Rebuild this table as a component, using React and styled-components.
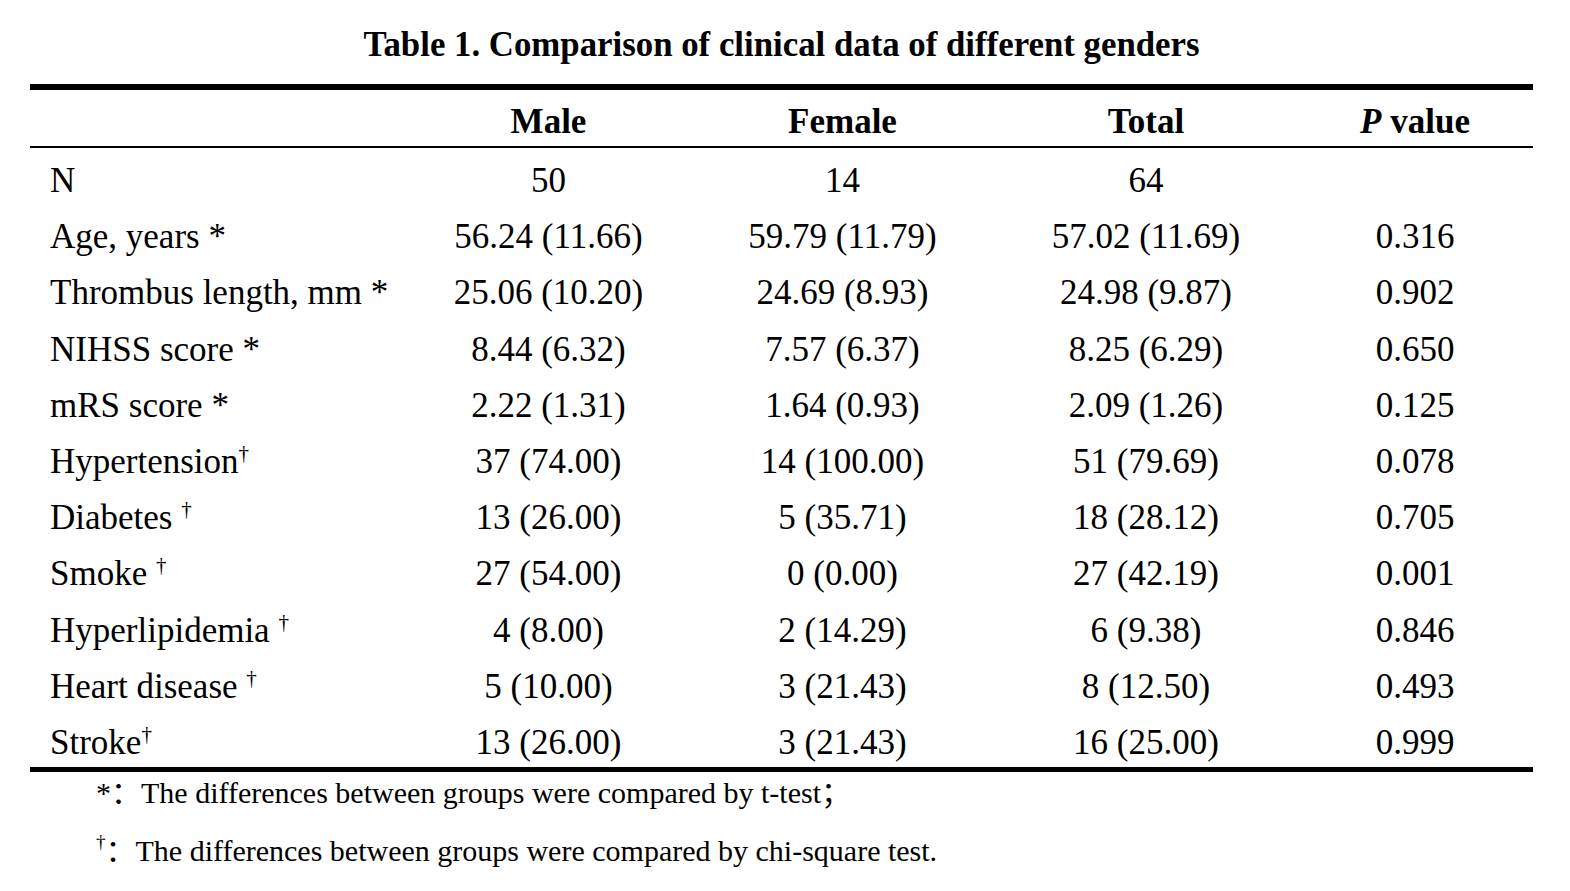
import React from "react";
import styled, { createGlobalStyle } from "styled-components";

const GlobalStyle = createGlobalStyle`
    body {
        margin: 0;
        background: #fff;
        color: #000;
        font-family: "Liberation Serif", "Times New Roman", serif;
    }
`;

const Page = styled.div`
    width: 1570px;
    height: 891px;
    padding: 0 37px 0 30px;
    box-sizing: border-box;
    overflow: hidden;
`;

const Title = styled.h1`
    margin: 0;
    height: 84px;
    box-sizing: border-box;
    padding-top: 25px;
    font-size: 34.8px;
    line-height: 40px;
    font-weight: bold;
    text-align: center;
`;

const Table = styled.div`
    border-top: 6px solid #000;
    border-bottom: 5px solid #000;
`;

const columns = "377px 283px 305px 302px 236px";

const HeadRow = styled.div`
    display: grid;
    grid-template-columns: ${columns};
    border-bottom: 2px solid #000;
    box-sizing: border-box;
    height: 58px;
`;

const HeadCell = styled.div`
    font-size: 35px;
    font-weight: bold;
    text-align: center;
    line-height: 56px;
    padding-top: 4px;
    i {
        font-style: italic;
    }
`;

const Body = styled.div`
    padding-top: 5px;
`;

const Row = styled.div`
    display: grid;
    grid-template-columns: ${columns};
    height: 56.2px;
    &:last-child {
        height: 52px;
        overflow: hidden;
    }
`;

const Cell = styled.div`
    font-size: 35px;
    line-height: 56px;
    text-align: ${props => (props.$label ? "left" : "center")};
    padding-left: ${props => (props.$label ? "20px" : "0")};
    white-space: nowrap;
    sup {
        font-size: 21px;
        line-height: 0;
        vertical-align: 13px;
    }
`;

const Notes = styled.div`
    padding: 0 0 0 66px;
    margin-top: -8px;
`;

const Note = styled.p`
    margin: 0;
    font-family: "Liberation Serif", "Noto Sans CJK SC", serif;
    font-size: 30px;
    line-height: 58px;
    white-space: nowrap;
    sup {
        font-size: 19px;
        line-height: 0;
        vertical-align: 13px;
    }
`;

const rows = [
    ["N", "", "50", "14", "64", ""],
    ["Age, years *", "", "56.24 (11.66)", "59.79 (11.79)", "57.02 (11.69)", "0.316"],
    ["Thrombus length, mm *", "", "25.06 (10.20)", "24.69 (8.93)", "24.98 (9.87)", "0.902"],
    ["NIHSS score *", "", "8.44 (6.32)", "7.57 (6.37)", "8.25 (6.29)", "0.650"],
    ["mRS score *", "", "2.22 (1.31)", "1.64 (0.93)", "2.09 (1.26)", "0.125"],
    ["Hypertension", "†", "37 (74.00)", "14 (100.00)", "51 (79.69)", "0.078"],
    ["Diabetes ", "†", "13 (26.00)", "5 (35.71)", "18 (28.12)", "0.705"],
    ["Smoke ", "†", "27 (54.00)", "0 (0.00)", "27 (42.19)", "0.001"],
    ["Hyperlipidemia ", "†", "4 (8.00)", "2 (14.29)", "6 (9.38)", "0.846"],
    ["Heart disease ", "†", "5 (10.00)", "3 (21.43)", "8 (12.50)", "0.493"],
    ["Stroke", "†", "13 (26.00)", "3 (21.43)", "16 (25.00)", "0.999"],
];

export default function App() {
    return (
        <Page>
            <GlobalStyle />
            <Title>Table 1. Comparison of clinical data of different genders</Title>
            <Table>
                <HeadRow>
                    <HeadCell />
                    <HeadCell>Male</HeadCell>
                    <HeadCell>Female</HeadCell>
                    <HeadCell>Total</HeadCell>
                    <HeadCell>
                        <i>P</i> value
                    </HeadCell>
                </HeadRow>
                <Body>
                    {rows.map(([label, mark, male, female, total, p]) => (
                        <Row key={label}>
                            <Cell $label>
                                {label}
                                {mark ? <sup>{mark}</sup> : null}
                            </Cell>
                            <Cell>{male}</Cell>
                            <Cell>{female}</Cell>
                            <Cell>{total}</Cell>
                            <Cell>{p}</Cell>
                        </Row>
                    ))}
                </Body>
            </Table>
            <Notes>
                <Note>*：The differences between groups were compared by t-test；</Note>
                <Note>
                    <sup>†</sup>：The differences between groups were compared by chi-square test.
                </Note>
            </Notes>
        </Page>
    );
}
